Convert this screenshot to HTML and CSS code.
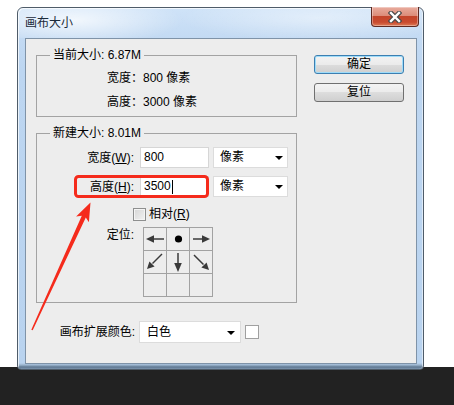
FILE: index.html
```html
<!DOCTYPE html>
<html lang="zh">
<head>
<meta charset="utf-8">
<title>画布大小</title>
<link rel="stylesheet" href="styles.css">
</head>
<body>
<div class="page">
  <div class="window">
    <div class="titlebar">
      <span class="title">画布大小</span>
      <span class="close">
        <svg width="14" height="12" viewBox="0 0 14 12">
          <path d="M3 2 L11 10 M11 2 L3 10" stroke="#4a4a4a" stroke-width="4.6" stroke-linecap="square" fill="none"/>
          <path d="M3 2 L11 10 M11 2 L3 10" stroke="#ffffff" stroke-width="2.4" stroke-linecap="square" fill="none"/>
        </svg>
      </span>
    </div>
    <div class="client">
      <div class="left">
        <fieldset class="group g1">
          <legend>当前大小: 6.87M</legend>
          <div class="info">宽度：800 像素</div>
          <div class="info">高度：3000 像素</div>
        </fieldset>
        <fieldset class="group g2">
          <legend>新建大小: 8.01M</legend>
          <div class="frow">
            <span class="lab">宽度(<u>W</u>):</span>
            <span class="input">800</span>
            <span class="select unit">像素<i class="tri"></i></span>
          </div>
          <div class="frow">
            <span class="lab">高度(<u>H</u>):</span>
            <span class="input">3500<i class="caret"></i></span>
            <span class="select unit">像素<i class="tri"></i></span>
          </div>
          <div class="check-row">
            <span class="checkbox"></span>
            <span>相对(<u>R</u>)</span>
          </div>
          <div class="anchor-row">
            <span class="lab">定位:</span>
            <div class="anchor">
              <span class="cell"><svg width="22" height="22" viewBox="0 0 22 22"><path d="M9 11 H20" stroke="#3a3a3a" stroke-width="1.5"/><polygon points="2,11 10,7.2 10,14.8" fill="#3a3a3a"/></svg></span>
              <span class="cell"><svg width="22" height="22" viewBox="0 0 22 22"><circle cx="11.5" cy="11" r="3.6" fill="#000"/></svg></span>
              <span class="cell"><svg width="22" height="22" viewBox="0 0 22 22"><path d="M3 11 H13" stroke="#3a3a3a" stroke-width="1.5"/><polygon points="20,11 12,7.2 12,14.8" fill="#3a3a3a"/></svg></span>
              <span class="cell"><svg width="22" height="22" viewBox="0 0 22 22"><path d="M18 3 L8.5 12.5" stroke="#3a3a3a" stroke-width="1.5"/><polygon points="3,18 10.6,15.6 5.4,10.4" fill="#3a3a3a"/></svg></span>
              <span class="cell"><svg width="22" height="22" viewBox="0 0 22 22"><path d="M11 2 V13" stroke="#3a3a3a" stroke-width="1.5"/><polygon points="11,21 7.2,12 14.8,12" fill="#3a3a3a"/></svg></span>
              <span class="cell"><svg width="22" height="22" viewBox="0 0 22 22"><path d="M4 4 L13.5 13.5" stroke="#3a3a3a" stroke-width="1.5"/><polygon points="19,19 11.4,16.6 16.6,11.4" fill="#3a3a3a"/></svg></span>
              <span class="cell"></span>
              <span class="cell"></span>
              <span class="cell"></span>
            </div>
          </div>
        </fieldset>
        <div class="color-row">
          <span class="lab">画布扩展颜色:</span>
          <span class="select color">白色<i class="tri"></i></span>
          <span class="swatch"></span>
        </div>
      </div>
      <div class="right">
        <div class="btn default">确定</div>
        <div class="btn">复位</div>
      </div>
    </div>
  </div>
  <svg class="annot" width="454" height="405" viewBox="0 0 454 405">
    <rect x="75.5" y="176.5" width="132" height="20" rx="3" ry="3" fill="none" stroke="#f52b1c" stroke-width="3"/>
    <polygon points="32.7,330.3 85.8,217.6 88.9,222.3 90.5,202.5 76.1,216.5 81.8,215.8 31.3,329.7" fill="#f52b1c"/>
  </svg>
</div>
</body>
</html>
```

FILE: styles.css
```css
html, body {
  margin: 0;
  padding: 0;
}
body {
  width: 454px;
  height: 405px;
  overflow: hidden;
  background: linear-gradient(to bottom, #ffffff 0, #ffffff 367px, #222222 367px, #222222 100%);
  font-family: "Liberation Sans", "Noto Sans CJK SC", sans-serif;
  font-size: 12px;
  line-height: 16px;
  color: #000;
}
.page {
  position: relative;
  width: 454px;
  height: 405px;
  padding: 7px 0 0 17px;
  box-sizing: border-box;
}
.window {
  width: 407px;
  height: 363px;
  box-sizing: border-box;
  border: 1px solid #4f5c69;
  border-radius: 6px 6px 4px 4px;
  background:
    linear-gradient(to bottom, #cfe3f8 0, #c3daf3 30px, #bdd6f1 60px, #b9d3ef calc(100% - 6px), #9bb4cd calc(100% - 4px), #5f7892 calc(100% - 2px), #7d95ad 100%);
  box-shadow: inset 1px 1px 0 rgba(255,255,255,0.7), inset -1px 0 0 rgba(255,255,255,0.5);
  display: flex;
  flex-direction: column;
  padding-bottom: 5px;
}
.titlebar {
  height: 30px;
  display: flex;
  align-items: center;
  justify-content: space-between;
  padding: 0 4px 0 7px;
  border-radius: 5px 5px 0 0;
  background:
    radial-gradient(ellipse 110px 26px at 55px 12px, rgba(255,255,255,0.75), rgba(255,255,255,0) 100%),
    radial-gradient(ellipse 140px 24px at 300px 10px, rgba(255,255,255,0.45), rgba(255,255,255,0) 100%);
}
.title {
  color: #1a2a3a;
  font-size: 12px;
  line-height: 16px;
}
.close {
  align-self: flex-start;
  margin-top: -1px;
  width: 48px;
  height: 20px;
  box-sizing: border-box;
  border: 1px solid #5e2a22;
  border-top: none;
  border-radius: 0 0 4px 4px;
  background: linear-gradient(to bottom, #e9ac9e 0, #dc8d7a 45%, #c3452b 50%, #c94b2f 80%, #dd7a55 100%);
  box-shadow: inset 0 0 0 1px rgba(255,255,255,0.35);
  display: flex;
  align-items: center;
  justify-content: center;
}
.close svg {
  display: block;
}
.client {
  flex: 1;
  margin: 0 6px 0 7px;
  box-sizing: border-box;
  background: #ededed;
  border: 1px solid #7f93a8;
  display: flex;
  gap: 17px;
  padding: 8px 0 0 10px;
}
.left {
  width: 261px;
  display: flex;
  flex-direction: column;
}
.group {
  margin: 0;
  padding: 0;
  border: 1px solid #a3a3a3;
  width: 261px;
  box-sizing: border-box;
  min-width: 0;
}
.group legend {
  margin-left: 13px;
  padding: 0 3px;
  line-height: 16px;
  font-size: 12px;
}
.g1 {
  padding: 7px 0 6px 0;
}
.g1 .info {
  padding-left: 70px;
  line-height: 16px;
  height: 16px;
}
.g1 .info + .info {
  margin-top: 8px;
}
.g2 {
  margin-top: 8px;
  padding: 6px 0 5px 0;
}
.lab {
  width: 103px;
  box-sizing: border-box;
  padding-right: 6px;
  text-align: right;
  flex: none;
  white-space: nowrap;
}
.frow {
  display: flex;
  align-items: center;
  height: 21px;
}
.frow + .frow {
  margin-top: 8px;
}
.input {
  width: 69px;
  height: 21px;
  box-sizing: border-box;
  background: #fff;
  border: 1px solid #d6d6d6;
  padding-left: 3px;
  line-height: 19px;
  display: flex;
  align-items: center;
}
.caret {
  display: inline-block;
  width: 1px;
  height: 14px;
  background: #000;
  margin-left: 1px;
}
.select {
  position: relative;
  height: 21px;
  box-sizing: border-box;
  background: #fff;
  border: 1px solid #dcdcdc;
  padding-left: 6px;
  line-height: 19px;
}
.unit {
  width: 75px;
  margin-left: 4px;
}
.tri {
  position: absolute;
  right: 4px;
  top: 8px;
  width: 0;
  height: 0;
  border-left: 4px solid transparent;
  border-right: 4px solid transparent;
  border-top: 4px solid #000;
}
.check-row {
  margin-top: 9px;
  height: 16px;
  display: flex;
  align-items: center;
  padding-left: 96px;
  gap: 3px;
}
.checkbox {
  width: 13px;
  height: 13px;
  box-sizing: border-box;
  border: 1px solid #8e8f8f;
  background: linear-gradient(135deg, #d6d6d6 0, #f2f2f2 100%);
  box-shadow: inset 0 0 0 1px #f4f4f4;
}
.anchor-row {
  margin-top: 5px;
  display: flex;
  align-items: flex-start;
}
.anchor-row .lab {
  line-height: 16px;
}
.anchor {
  margin-left: 3px;
  display: grid;
  grid-template-columns: repeat(3, 22px);
  grid-auto-rows: 22px;
  gap: 1px;
  padding: 1px;
  background: #a2a2a2;
}
.cell {
  background: #ededed;
  width: 22px;
  height: 22px;
}
.cell svg {
  display: block;
}
.color-row {
  margin-top: 18px;
  display: flex;
  align-items: center;
  height: 22px;
}
.color-row .lab {
  padding-right: 4px;
}
.select.color {
  width: 102px;
  height: 22px;
  line-height: 20px;
  padding-left: 7px;
}
.select.color .tri {
  right: 5px;
  top: 9px;
}
.swatch {
  width: 14px;
  height: 14px;
  box-sizing: border-box;
  margin-left: 4px;
  border: 1px solid #a0a0a0;
  background: #fff;
}
.right {
  width: 90px;
  padding-top: 8px;
  display: flex;
  flex-direction: column;
  gap: 9px;
}
.btn {
  height: 19px;
  box-sizing: border-box;
  border: 1px solid #707070;
  border-radius: 3px;
  background: linear-gradient(to bottom, #f3f3f3 0, #ebebeb 50%, #dddddd 50%, #cfcfcf 100%);
  text-align: center;
  line-height: 17px;
  font-size: 12px;
}
.btn.default {
  border-color: #3c7fb1;
  box-shadow: inset 0 0 0 1px #9fdcf9;
}
.annot {
  position: absolute;
  left: 0;
  top: 0;
  pointer-events: none;
}
```
